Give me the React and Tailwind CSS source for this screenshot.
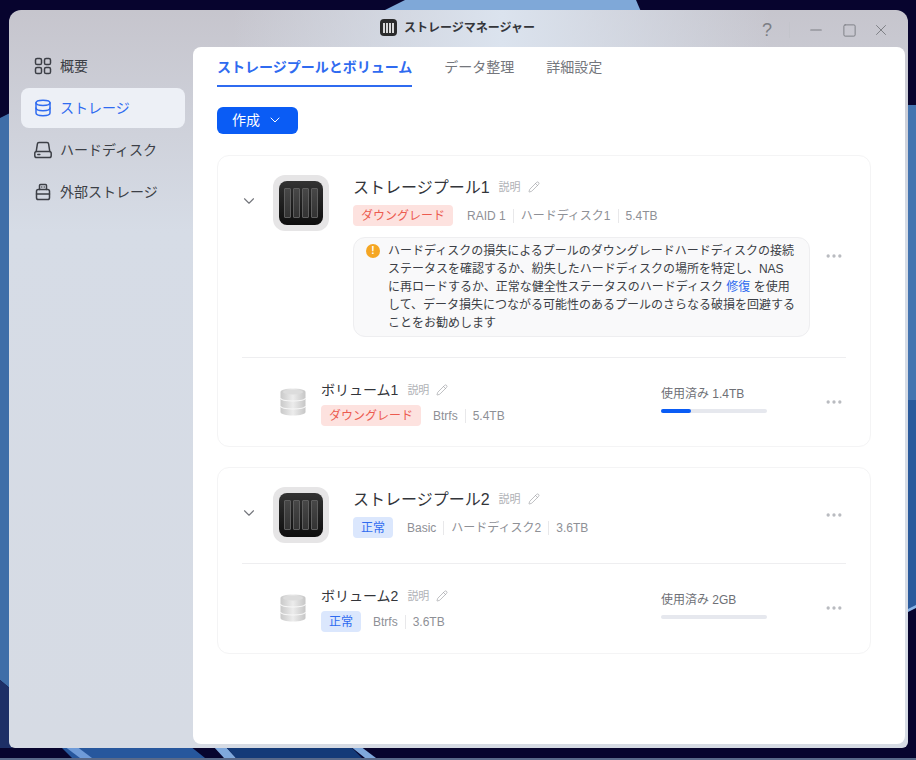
import { ChevronDown, Pencil, Ellipsis, X, Minus, Square } from 'lucide-react'

const font = "font-['Liberation_Sans','Noto_Sans_CJK_JP',sans-serif]"

function Wallpaper() {
  return (
    <svg className="absolute inset-0 h-full w-full" viewBox="0 0 916 760" preserveAspectRatio="none">
      <rect width="916" height="760" fill="#07042e" />
      <path d="M405 0 L636 0 L642 14 L377 14 Z" fill="#7fa8d8" />
      <path d="M0 118 L12 112 L12 690 L0 680 Z" fill="#3f6ea8" />
      <path d="M0 680 L12 690 L12 748 L0 748 Z" fill="#1d2f66" />
      <path d="M904 105 L916 105 L916 400 L904 400 Z" fill="#4474b0" />
      <path d="M904 400 L916 400 L916 606 L904 612 Z" fill="#2a5a9c" />
      <path d="M904 611 L916 605 L916 608 L904 614 Z" fill="#8ab4e6" />
      <path d="M60 746 L190 746 L205 758 L72 758 Z" fill="#27579d" />
      <path d="M64 746 L76 746 L92 758 L80 758 Z" fill="#6f9bd8" />
      <path d="M213 746 L225 746 L236 758 L224 758 Z" fill="#7fa8dc" />
      <path d="M225 746 L350 746 L362 758 L236 758 Z" fill="#143a78" />
      <path d="M350 746 L360 746 L376 758 L365 758 Z" fill="#7fa8dc" />
      <rect y="758" width="916" height="2" fill="#5a6a8a" />
    </svg>
  )
}

function NavGlyph({ name, color }) {
  const p = { fill: 'none', stroke: color, strokeWidth: 1.5, strokeLinecap: 'round', strokeLinejoin: 'round' }
  return (
    <svg width="18" height="18" viewBox="0 0 18 18" className="shrink-0">
      {name === 'grid' && (
        <g {...p}>
          <rect x="1.5" y="1.5" width="6" height="6" rx="1.6" />
          <rect x="10.5" y="1.5" width="6" height="6" rx="1.6" />
          <rect x="1.5" y="10.5" width="6" height="6" rx="1.6" />
          <rect x="10.5" y="10.5" width="6" height="6" rx="1.6" />
        </g>
      )}
      {name === 'db' && (
        <g {...p}>
          <ellipse cx="9" cy="3.8" rx="7" ry="2.6" />
          <path d="M2 3.8V14c0 1.5 3.1 2.7 7 2.7s7-1.2 7-2.7V3.8" />
          <path d="M2 9c0 1.5 3.1 2.7 7 2.7S16 10.5 16 9" />
        </g>
      )}
      {name === 'disk' && (
        <g {...p}>
          <path d="M2.2 10.5 3.4 2.8C3.5 2 4.1 1.5 4.9 1.5h8.2c.8 0 1.4.5 1.5 1.3l1.2 7.7" />
          <rect x="0.8" y="10.5" width="16.4" height="6" rx="1.8" />
          <path d="M3.8 13.5h2" />
        </g>
      )}
      {name === 'usb' && (
        <g {...p}>
          <path d="M5.5 6.5V2.5c0-.6.4-1 1-1h5c.6 0 1 .4 1 1v4" />
          <rect x="2.5" y="6.5" width="13" height="10" rx="1.8" />
          <path d="M2.5 11h13M7.8 4h0M10.2 4h0" />
        </g>
      )}
    </svg>
  )
}

function NavItem({ icon, label, active }) {
  return (
    <div
      className={`flex h-10 items-center gap-2 rounded-lg pl-[13px] text-sm ${
        active ? 'bg-[#edf0f6] text-[#2f6bf0]' : 'text-[#3c3f46]'
      }`}
    >
      <NavGlyph name={icon} color={active ? '#2f6bf0' : '#3c3f46'} />
      <span>{label}</span>
    </div>
  )
}

function NasIcon() {
  return (
    <div className="flex h-14 w-14 shrink-0 items-center justify-center rounded-xl bg-[#e6e5e6]">
      <div className="flex h-[44px] w-[44px] items-center justify-center gap-[1.5px] rounded-lg bg-gradient-to-b from-[#333] to-[#0e0e0e]">
        {[0, 1, 2, 3].map((i) => (
          <div
            key={i}
            className="h-[30px] w-[7.5px] rounded-[1px] border border-[#5e5e5e] bg-gradient-to-b from-[#474747] to-[#333]"
          />
        ))}
      </div>
    </div>
  )
}

function TitleIcon() {
  return (
    <div className="flex h-[17px] w-[17px] items-center justify-center rounded-[4px] bg-[#2b2b2b]">
      <div className="flex h-[10px] gap-[1px]">
        {[0, 1, 2, 3].map((i) => (
          <div key={i} className="w-[2px] bg-[#d8d8d8]" />
        ))}
      </div>
    </div>
  )
}

function VolumeIcon() {
  return (
    <svg width="26" height="28" viewBox="0 0 26 28" className="-mt-[2px] shrink-0">
      <defs>
        <linearGradient id="vol" x1="0" x2="1" y1="0" y2="0">
          <stop offset="0" stopColor="#c9c9c9" />
          <stop offset="0.5" stopColor="#ececec" />
          <stop offset="1" stopColor="#c6c6c6" />
        </linearGradient>
      </defs>
      <path d="M0.5 4C0.5 1.8 6 0.5 13 0.5S25.5 1.8 25.5 4V24C25.5 26.2 20 27.5 13 27.5S0.5 26.2 0.5 24Z" fill="url(#vol)" />
      <path d="M0.5 10c0 2 5.5 3 12.500 3s12.500-1 12.500-3M0.5 18c0 2 5.5 3 12.500 3s12.500-1 12.500-3" fill="none" stroke="#f7f7f7" strokeWidth="1.2" />
      <ellipse cx="13" cy="4" rx="10" ry="2.4" fill="#dcdcdc" />
    </svg>
  )
}

function Badge({ ok, children }) {
  return (
    <span
      className={`inline-flex h-[21px] items-center rounded px-2 text-xs ${
        ok ? 'bg-[#dbe7fd] text-[#2f6bf0]' : 'bg-[#fde2df] text-[#ec5b4f]'
      }`}
    >
      {children}
    </span>
  )
}

function Meta({ items }) {
  return (
    <div className="flex items-center text-xs text-[#8e9096]">
      {items.map((t, i) => (
        <span key={t} className={`${i > 0 ? 'ml-[7px] border-l border-[#e8e8ea] pl-[7px]' : ''} leading-[14px]`}>
          {t}
        </span>
      ))}
    </div>
  )
}

function Desc() {
  return (
    <span className="flex items-center gap-[7px] text-[11px] text-[#b0b2b6]">
      説明
      <Pencil size={12} strokeWidth={1.3} className="text-[#9c9ea3]" />
    </span>
  )
}

function More() {
  return <Ellipsis size={20} className="shrink-0 text-[#b9bbc0]" strokeWidth={2} />
}

function Pool({ children }) {
  return <section className="rounded-xl border border-[#f4f4f5] bg-white px-6">{children}</section>
}

function PoolHead({ name, ok, status, items, alert }) {
  return (
    <div className="-ml-[2px] flex items-start pt-[19px]">
      <ChevronDown size={18} strokeWidth={1.5} className="mt-[17px] mr-[15px] shrink-0 text-[#74767c]" />
      <NasIcon />
      <div className="ml-6 w-[457px]">
        <div className="flex h-[24px] items-center gap-[9px]">
          <h3 className="pt-[2px] text-base leading-6 font-normal text-[#33353a]">{name}</h3>
          <Desc />
        </div>
        <div className="mt-[6px] flex items-center gap-[14px]">
          <Badge ok={ok}>{status}</Badge>
          <Meta items={items} />
        </div>
        {alert}
      </div>
      <div className={`ml-[14px] ${alert ? 'mt-[71px]' : 'mt-[18px]'}`}>
        <More />
      </div>
    </div>
  )
}

function VolumeRow({ name, ok, status, items, used, pct }) {
  return (
    <div className="-ml-[2px] flex items-center pl-10">
      <VolumeIcon />
      <div className="ml-[15px] w-[340px]">
        <div className="-mt-px flex h-[24px] items-center gap-[9px]">
          <h4 className="text-sm font-normal text-[#33353a]">{name}</h4>
          <Desc />
        </div>
        <div className="mt-[3px] flex items-center gap-3">
          <Badge ok={ok}>{status}</Badge>
          <Meta items={items} />
        </div>
      </div>
      <div className="mb-[6px] w-[106px]">
        <p className="text-xs leading-4 text-[#6e7076]">使用済み {used}</p>
        <div className="mt-[7px] h-1 rounded-full bg-[#e6e8ee]">
          <div className="h-1 rounded-full bg-[#0a5cf5]" style={{ width: `${pct}%` }} />
        </div>
      </div>
      <div className="-mt-[2px] ml-[57px]">
        <More />
      </div>
    </div>
  )
}

export default function App() {
  return (
    <div className={`relative h-[760px] w-[916px] overflow-hidden ${font}`}>
      <Wallpaper />
      <div className="relative mt-[10px] ml-[9px] flex h-[738px] w-[899px] flex-col rounded-t-xl rounded-b-md bg-gradient-to-b from-[#c6c5cd] from-0% via-[#d6dce6] via-30% to-[#d6dbe4] pr-[3px] pb-1">
        <div className="flex h-[37px] shrink-0 items-center rounded-t-xl bg-gradient-to-r from-transparent from-25% via-[#dbe3ee] via-55% to-transparent to-85%">
          <div className="ml-[371px] flex items-center gap-[7px] pb-[2px]">
            <TitleIcon />
            <span className="text-xs font-bold text-[#33353a]">ストレージマネージャー</span>
          </div>
          <div className="ml-auto flex items-center pt-[3px] pr-[15px] text-[#7c7e84]">
            <span className="text-lg leading-none">?</span>
            <div className="mx-[17px] h-4 w-px bg-[#c3c4cb]" />
            <Minus size={18} strokeWidth={1.5} />
            <Square size={15} strokeWidth={1.5} className="ml-[17px]" />
            <X size={18} strokeWidth={1.3} className="ml-[15px]" />
          </div>
        </div>

        <div className="flex min-h-0 flex-1">
          <nav className="-mt-px flex w-[184px] shrink-0 flex-col gap-[2px] pl-3 pr-2">
            <NavItem icon="grid" label="概要" />
            <NavItem icon="db" label="ストレージ" active />
            <NavItem icon="disk" label="ハードディスク" />
            <NavItem icon="usb" label="外部ストレージ" />
          </nav>

          <main className="flex-1 rounded-lg bg-white pr-[34px] pl-6">
            <div className="flex h-10 gap-8 text-sm text-[#74767c]">
              <span className="h-10 border-b-2 border-[#2f6bf0] pt-[10px] font-bold text-[#2f6bf0]">
                ストレージプールとボリューム
              </span>
              <span className="pt-[10px]">データ整理</span>
              <span className="pt-[10px]">詳細設定</span>
            </div>

            <button className="mt-5 flex h-[27px] w-[81px] items-center justify-center gap-[7px] rounded-md bg-[#0a5cf5] pb-px text-sm text-white">
              作成
              <ChevronDown size={16} strokeWidth={1.5} />
            </button>

            <div className="mt-[21px] flex flex-col gap-5">
              <Pool>
                <PoolHead
                  name="ストレージプール1"
                  status="ダウングレード"
                  items={['RAID 1', 'ハードディスク1', '5.4TB']}
                  alert={
                    <div className="mt-[11px] flex h-[100px] gap-2 rounded-xl border border-[#eeeef0] bg-[#f9f9fa] px-3 pt-1 text-xs leading-[18px] text-[#3c3f46]">
                      <span className="mt-[2px] flex h-[14px] w-[14px] shrink-0 items-center justify-center rounded-full bg-[#f5a623] text-[10px] font-bold text-white">
                        !
                      </span>
                      <p className="whitespace-nowrap">
                        ハードディスクの損失によるプールのダウングレードハードディスクの接続
                        <br />
                        ステータスを確認するか、紛失したハードディスクの場所を特定し、NAS
                        <br />
                        に再ロードするか、正常な健全性ステータスのハードディスク{' '}
                        <span className="text-[#2f6bf0]">修復</span> を使用
                        <br />
                        して、データ損失につながる可能性のあるプールのさらなる破損を回避する
                        <br />
                        ことをお勧めします
                      </p>
                    </div>
                  }
                />
                <div className="mt-5 border-t border-[#eeeef0]" />
                <div className="pt-[21px] pb-[20px]">
                  <VolumeRow
                    name="ボリューム1"
                    status="ダウングレード"
                    items={['Btrfs', '5.4TB']}
                    used="1.4TB"
                    pct={28}
                  />
                </div>
              </Pool>
              <Pool>
                <PoolHead
                  name="ストレージプール2"
                  ok
                  status="正常"
                  items={['Basic', 'ハードディスク2', '3.6TB']}
                />
                <div className="mt-5 border-t border-[#eeeef0]" />
                <div className="pt-[21px] pb-[21px]">
                  <VolumeRow name="ボリューム2" ok status="正常" items={['Btrfs', '3.6TB']} used="2GB" pct={0} />
                </div>
              </Pool>
            </div>
          </main>
        </div>
      </div>
    </div>
  )
}
